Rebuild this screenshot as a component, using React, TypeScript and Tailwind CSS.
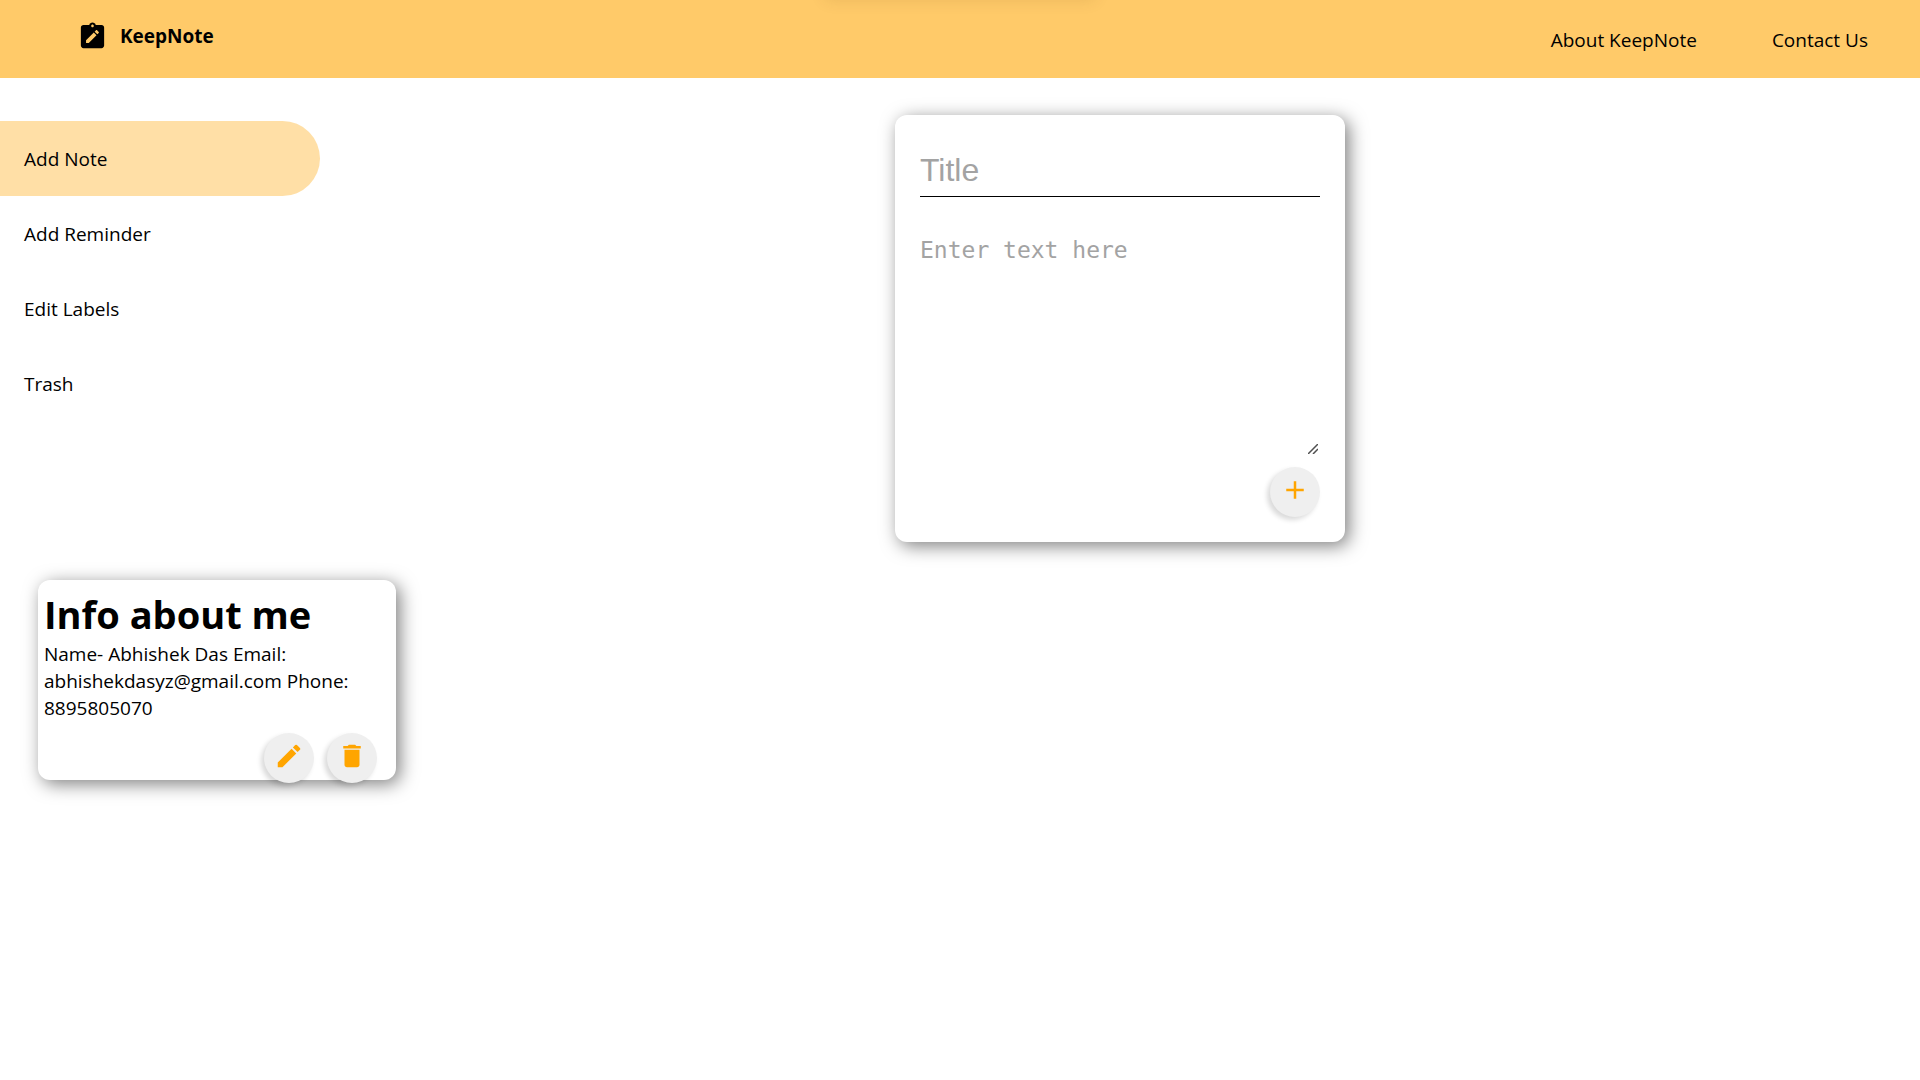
import { useState } from "react";
import { MdAdd, MdDelete, MdEdit } from "react-icons/md";

const menu = ["Add Note", "Add Reminder", "Edit Labels", "Trash"];
const roundButton =
  "flex h-[50px] w-[50px] shrink-0 justify-center rounded-full bg-[#efefef] pt-2 text-[#ffa500] shadow-[-3px_3px_5px_rgba(0,0,0,0.15)]";
const panel = "rounded-xl bg-white shadow-[4px_4px_18px_rgba(0,0,0,0.5)]";

function LogoIcon() {
  return (
    <svg viewBox="0 0 24 24" className="h-[31px] w-[31px]" fill="#000" aria-hidden="true">
      <path
        fillRule="evenodd"
        d="M19 3h-4.5C14.2 1.9 13.2 1.2 12 1.2S9.8 1.9 9.5 3H5c-1.1 0-2 .9-2 2v14c0 1.1.9 2 2 2h14c1.1 0 2-.9 2-2V5c0-1.1-.9-2-2-2zm-7-.2c.55 0 1 .45 1 1s-.45 1-1 1-1-.45-1-1 .45-1 1-1zM7 14.9V17h2.1l6-6L13 8.9l-6 6zM16.8 9.3c.25-.25.25-.6 0-.85l-1.25-1.25c-.25-.25-.6-.25-.85 0l-1.05 1.05 2.1 2.1 1.05-1.05z"
      />
    </svg>
  );
}

export default function App() {
  const [active, setActive] = useState("Add Note");
  return (
    <div className="min-h-screen bg-white font-['Open_Sans','Noto_Sans',sans-serif] text-[19px] leading-[27px] text-black">
      <header className="relative flex h-[78px] items-center justify-between overflow-hidden bg-[#ffca69] pr-[52px] pl-[77px]">
        <div className="absolute -top-5 left-1/2 h-5 w-[270px] -translate-x-1/2 shadow-[0_0_16px_rgba(90,60,0,0.12)]" />
        <div className="flex items-center gap-3 pb-1.5 font-bold">
          <LogoIcon />
          <span>KeepNote</span>
        </div>
        <nav className="flex gap-[75px] pt-0.5" aria-label="Site">
          <a href="#about">About KeepNote</a>
          <a href="#contact">Contact Us</a>
        </nav>
      </header>

      <main>
        <div className="flex">
          <nav className="flex w-80 shrink-0 flex-col pt-[43px]" aria-label="Notes">
            {menu.map((item) => (
              <button
                key={item}
                type="button"
                onClick={() => setActive(item)}
                className={
                  "h-[75px] rounded-r-full pt-0.5 pl-6 text-left " + (item === active ? "bg-[#ffdfa6]" : "bg-white")
                }
              >
                {item}
              </button>
            ))}
          </nav>

          <section className="flex flex-1 justify-center pt-[37px]">
            <form
              className={"flex w-[450px] flex-col p-[25px] " + panel}
              onSubmit={(e) => e.preventDefault()}
            >
              <input
                aria-label="Title"
                placeholder="Title"
                className="h-[57px] w-full border-b border-black pt-1 font-['Liberation_Sans',Arial,sans-serif] text-[32px] outline-none placeholder:text-[#a3a3a3]"
              />
              <div className="relative mt-10">
                <textarea
                  aria-label="Note text"
                  placeholder="Enter text here"
                  className="block h-[218px] w-full resize-none font-['DejaVu_Sans_Mono',monospace] text-[23px] leading-[27px] outline-none placeholder:text-[#a3a3a3]"
                />
                <svg
                  viewBox="0 0 10 10"
                  className="pointer-events-none absolute right-0.5 bottom-px h-2.5 w-2.5"
                  stroke="#505050"
                  strokeWidth="1.5"
                  aria-hidden="true"
                >
                  <path d="M0 10L10 0M5 10L10 5" />
                </svg>
              </div>
              <button type="submit" aria-label="Add note" className={"mt-3 self-end " + roundButton}>
                <MdAdd size={30} />
              </button>
            </form>
          </section>
        </div>

        <section className="flex flex-wrap gap-8 px-[38px] pt-[38px]">
          <article className={"flex h-[200px] w-[358px] flex-col px-1.5 pt-2 " + panel}>
            <h1 className="text-[38px] leading-[53px] font-bold">Info about me</h1>
            <p>Name- Abhishek Das Email: abhishekdasyz@gmail.com Phone: 8895805070</p>
            <div className="mt-[11px] flex justify-end gap-[13px] pr-[13px]">
              <button type="button" aria-label="Edit note" className={roundButton}>
                <MdEdit size={30} />
              </button>
              <button type="button" aria-label="Delete note" className={roundButton}>
                <MdDelete size={30} />
              </button>
            </div>
          </article>
        </section>
      </main>
    </div>
  );
}
